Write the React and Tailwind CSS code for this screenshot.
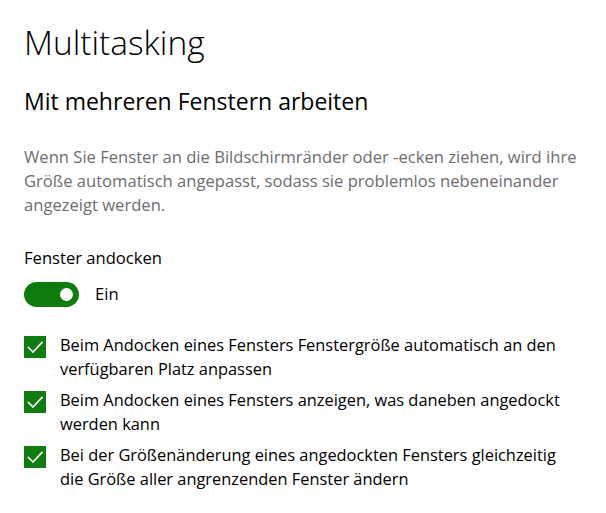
import React from "react";

function Check({ children }) {
  return (
    <div className="flex items-start gap-[14px]">
      <div className="mt-[2.6px] w-[22px] h-[22px] shrink-0 bg-[#107c10] flex items-center justify-center">
        <svg width="22" height="22" viewBox="0 0 22 22" fill="none">
          <path d="M4.5 11.5 L9 16 L18 6.5" stroke="white" strokeWidth="1.6" strokeLinecap="square" />
        </svg>
      </div>
      <div className="text-[16.4px] leading-[24px] text-black whitespace-nowrap">{children}</div>
    </div>
  );
}

export default function App() {
  return (
    <div
      className="w-[606px] h-[513px] bg-white pl-[24px] pr-[16px] overflow-hidden"
      style={{ fontFamily: '"Open Sans", "Noto Sans", sans-serif' }}
    >
      <h1 className="pt-[22px] text-[33.5px] leading-[40px] font-light text-black">Multitasking</h1>
      <h2 className="mt-[24px] text-[23px] leading-[30px] font-normal text-black">Mit mehreren Fenstern arbeiten</h2>
      <p className="mt-[28.6px] text-[16.6px] leading-[24px] text-[#6d6d6d] whitespace-nowrap">
        Wenn Sie Fenster an die Bildschirmränder oder -ecken ziehen, wird ihre
        <br />
        Größe automatisch angepasst, sodass sie problemlos nebeneinander
        <br />
        angezeigt werden.
      </p>
      <div className="mt-[29.4px] text-[16.6px] leading-[24px] text-black">Fenster andocken</div>
      <div className="mt-[11.6px] flex items-center gap-[16px]">
        <div className="w-[55px] h-[25px] rounded-full bg-[#107c10] flex items-center justify-end pr-[6px]">
          <div className="w-[13px] h-[13px] rounded-full bg-white" />
        </div>
        <span className="text-[16.6px] leading-[24px] text-black">Ein</span>
      </div>
      <div className="mt-[26.4px] flex flex-col gap-[7px]">
        <Check>
          Beim Andocken eines Fensters Fenstergröße automatisch an den
          <br />
          verfügbaren Platz anpassen
        </Check>
        <Check>
          Beim Andocken eines Fensters anzeigen, was daneben angedockt
          <br />
          werden kann
        </Check>
        <Check>
          Bei der Größenänderung eines angedockten Fensters gleichzeitig
          <br />
          die Größe aller angrenzenden Fenster ändern
        </Check>
      </div>
    </div>
  );
}
